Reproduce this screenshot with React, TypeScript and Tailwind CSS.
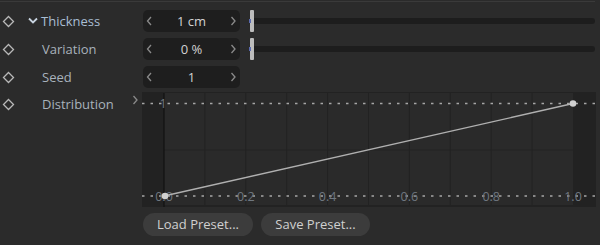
const font = { fontFamily: '"Open Sans", "Noto Sans", sans-serif' };

function Diamond() {
  return (
    <svg width="13" height="13" viewBox="0 0 13 13">
      <path d="M6.5 1.5 L11.5 6.5 L6.5 11.5 L1.5 6.5 Z" fill="none" stroke="#b8b8b8" strokeWidth="1.3" />
    </svg>
  );
}

function Chev({ dir }: { dir: "l" | "r" | "d" }) {
  const d = dir === "l" ? "M5 1 L1.5 5 L5 9" : dir === "r" ? "M1.5 1 L5 5 L1.5 9" : "M1 2.5 L5 6.5 L9 2.5";
  const w = dir === "d" ? 10 : 7;
  return (
    <svg width={w} height="10" viewBox={`0 0 ${w} 10`}>
      <path d={d} fill="none" stroke={dir === "d" ? "#c8d4e0" : "#8a8a8a"} strokeWidth={dir === "d" ? 1.8 : 1.3} />
    </svg>
  );
}

function Field({ value }: { value: string }) {
  return (
    <div className="w-[97px] h-[22px] rounded-[5px] bg-[#1e1e1e] flex items-center justify-between px-[3px]">
      <Chev dir="l" />
      <span className="text-[13px] text-[#d2d2d2] leading-none">{value}</span>
      <Chev dir="r" />
    </div>
  );
}

function Slider() {
  return (
    <div className="flex-1 ml-[10px] mr-[5px] h-[22px] relative flex items-center">
      <div className="h-[6px] w-full rounded-full bg-[#1d1d1d]" />
      <div className="absolute left-0 top-0 h-[22px] w-[4px] bg-[#bcbcbc] rounded-[1px]" />
      <div className="absolute left-[-1px] top-[9px] h-[4px] w-[2px] bg-[#5a6ab0]" />
    </div>
  );
}

function Row({ label, value, slider, open }: { label: string; value: string; slider?: boolean; open?: boolean }) {
  return (
    <div className="flex items-center h-[28px]">
      <div className="w-[16px] flex justify-center">
        <Diamond />
      </div>
      <div className={`w-[127px] flex items-center gap-[3px] ${open ? "pl-[12px]" : "pl-[26px]"}`}>
        {open && <Chev dir="d" />}
        <span className={`text-[13px] leading-none ${open ? "text-[#a9bed3]" : "text-[#a8b2bc]"}`}>{label}</span>
      </div>
      <Field value={value} />
      {slider && <Slider />}
    </div>
  );
}

function Graph() {
  const x0 = 22;
  const x1 = 431;
  const yTop = 11.5;
  const yBot = 104;
  const step = (x1 - x0) / 10;
  const cols = Array.from({ length: 11 }, (_, i) => x0 + step * i);
  const labels = ["0.0", "0.2", "0.4", "0.6", "0.8", "1.0"];
  return (
    <svg width="454" height="115" viewBox="0 0 454 115" className="block">
      <rect x="0" y="0" width="454" height="115" fill="#222222" />
      <rect x={x0} y="1" width={x1 - x0} height="112" fill="#2a2a2a" />
      {cols.slice(1, 10).map((x) => (
        <line key={x} x1={x} y1="1" x2={x} y2="113" stroke="#222222" strokeWidth="1" />
      ))}
      <line x1={x0} y1="58" x2={x1} y2="58" stroke="#222222" strokeWidth="1" />
      <line x1={x0} y1="1" x2={x0} y2="115" stroke="#111111" strokeWidth="1.2" />
      <line x1="0" y1={yTop} x2="454" y2={yTop} stroke="#a6a6a6" strokeWidth="1.6" strokeDasharray="2.5 6" />
      <line x1="0" y1={yBot} x2="454" y2={yBot} stroke="#a6a6a6" strokeWidth="1.6" strokeDasharray="2.5 6" />
      <text x={x0 - 1} y={yTop + 4.5} textAnchor="middle" fontSize="12.5" fill="#6f7780" style={font}>1</text>
      {labels.map((l, i) => (
        <text key={l} x={x0 + step * 2 * i} y={yBot + 4.5} textAnchor="middle" fontSize="12.5" fill="#6f7780" style={font}>
          {l}
        </text>
      ))}
      <line x1={x0} y1={yBot} x2={x1} y2={yTop} stroke="#b0b0b0" strokeWidth="1.3" />
      <circle cx={x0 + 1} cy={yBot} r="3.3" fill="#d0d0d0" />
      <circle cx={x1} cy={yTop} r="3.3" fill="#d0d0d0" />
    </svg>
  );
}

export default function App() {
  return (
    <div className="w-[600px] h-[245px] bg-[#2b2b2b] overflow-hidden" style={font}>
      <div className="h-[1px] mt-[1px] w-[595px] bg-[#3a3a3a]" />
      <div className="pt-[5px]">
        <Row label="Thickness" value="1 cm" slider open />
        <Row label="Variation" value="0 %" slider />
        <Row label="Seed" value="1" />
        <div className="flex mt-[1px]">
          <div className="w-[16px] h-[24px] flex justify-center items-center">
            <Diamond />
          </div>
          <div className="w-[126px] h-[24px] flex items-center justify-between pl-[26px] pr-[3px]">
            <span className="text-[13px] leading-none text-[#a8b2bc]">Distribution</span>
            <span className="self-start mt-[3px]">
              <Chev dir="r" />
            </span>
          </div>
          <Graph />
        </div>
        <div className="flex gap-[8px] pl-[143px] mt-[6px]">
          <button className="h-[23px] w-[110px] rounded-full bg-[#3c3c3c] text-[13px] text-[#d0d0d0]">Load Preset...</button>
          <button className="h-[23px] w-[109px] rounded-full bg-[#3c3c3c] text-[13px] text-[#d0d0d0]">Save Preset...</button>
        </div>
      </div>
    </div>
  );
}
